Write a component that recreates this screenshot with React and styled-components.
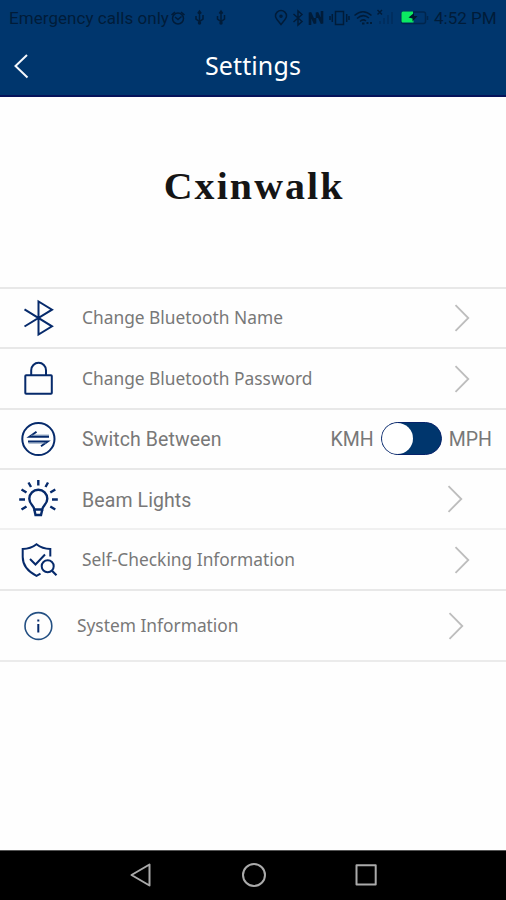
import React, { useState } from "react";
import styled, { createGlobalStyle } from "styled-components";

const App = () => {
  const [mph, setMph] = useState(false);

  return (
    <Screen>
      <GlobalStyle />
      <Header>
        <StatusBar>
          <Carrier>Emergency calls only</Carrier>
          <StatusLeft />
          <StatusRight />
          <Clock>4:52 PM</Clock>
        </StatusBar>
        <TitleBar>
          <BackButton aria-label="Back">
            <svg width="16" height="26" viewBox="0 0 16 26">
              <path d="M14 2L2.500 13L14.500 24.500" />
            </svg>
          </BackButton>
          <Title>Settings</Title>
        </TitleBar>
      </Header>
      <Brand>
        <span>Cxinwalk</span>
      </Brand>
      <List>
        <Row height="60px">
          <BluetoothIcon />
          <Label>Change Bluetooth Name</Label>
          <Arrow />
        </Row>
        <Row height="61px">
          <LockIcon />
          <Label>Change Bluetooth Password</Label>
          <Arrow />
        </Row>
        <Row height="60px">
          <SwapIcon />
          <Label roboto>Switch Between</Label>
          <Units>
            <span>KMH</span>
            <Toggle on={mph} onClick={() => setMph(!mph)} aria-label="Speed unit">
              <i />
            </Toggle>
            <span>MPH</span>
          </Units>
        </Row>
        <Row height="60px">
          <BulbIcon />
          <Label roboto low>Beam Lights</Label>
          <Arrow right="43.5px" />
        </Row>
        <Row height="61px" soft>
          <ShieldIcon />
          <Label>Self-Checking Information</Label>
          <Arrow />
        </Row>
        <Row height="73px">
          <InfoIcon />
          <Label left="77px">System Information</Label>
          <Arrow right="42px" />
        </Row>
      </List>
      <NavBar>
        <svg width="24" height="28" viewBox="0 0 24 28">
          <path d="M20.5 3.5V24.5L2.5 14Z" />
        </svg>
        <svg width="28" height="28" viewBox="0 0 28 28">
          <circle cx="14" cy="14" r="11" />
        </svg>
        <svg width="24" height="28" viewBox="0 0 24 28">
          <rect x="1.500" y="4.2" width="19.2" height="19.2" />
        </svg>
      </NavBar>
    </Screen>
  );
};

const StatusLeft = () => (
  <StatusIcons width="62" height="20" viewBox="168 8 62 20">
    <circle cx="178" cy="18.5" r="5.5" />
    <path d="M171.500 15L175 12M181 12L184.500 15M175 17L178 19.500L181.500 16.500" />
    <path d="M199.500 12V24M196 16V19L199.500 21.500L203 19V15M197.800 13.500L199.500 11L201.200 13.500M221 12V24M217.500 16V19L221 21.500L224.500 19V15M219.300 13.500L221 11L222.700 13.500" />
    <circle cx="199.500" cy="23" r="1" />
    <circle cx="221" cy="23" r="1" />
  </StatusIcons>
);

const StatusRight = () => (
  <StatusIcons push width="156" height="20" viewBox="273 8 156 20">
    <path d="M281 24.500C278 20.500 275.500 18.500 275.500 16A5.500 5.500 0 0 1 286.500 16C286.500 18.500 284 20.500 281 24.500Z" />
    <circle cx="281" cy="16.300" r="1" />
    <path d="M293.500 14L302 21.500L298 25V11L302 14.500L293.500 22" />
    <path strokeWidth="2.600" d="M310 25V12.500L315 23.500V18M322 11V23.500L317 12.500V18" />
    <path d="M335.500 11.500H343.500V24.500H335.500ZM332.300 14V22M346.700 14V22M330 16V20M349 16V20" />
    <path d="M354.500 15.500Q363 8 371.500 15.500M357 18.500Q363 13 369 18M360 21.500Q363 18.500 366 21" />
    <path strokeWidth="2" d="M362 23.500H364.500M366.500 23H368.500M370 23H372" />
    <path d="M377.500 10L382 14.500M382 10L377.500 14.500" />
    <path opacity="0.35" d="M380 24V21M384 24V18M388 24V15M392 24V12" />
    <rect x="401.500" y="12" width="24" height="11.500" rx="2" opacity="0.6" />
    <path opacity="0.6" d="M427.500 16V20" />
    <path stroke="none" fill="#0bea62" d="M403 11.500H413V14.500L410 17.500H413.500V22.500H402.500Q401.500 22.500 401.500 21V13Q401.500 11.500 403 11.500Z" />
    <path stroke="none" fill="#00182f" d="M408.500 17.500L414 13V16H417.500L412.500 21.500V18.500Z" />
  </StatusIcons>
);

const BluetoothIcon = () => (
  <RowIcon viewBox="0 0 78 44">
    <path d="M24.500 13.300L52 30.300L38.500 38.500V5.500L52 13.700L24.500 30.500" />
  </RowIcon>
);

const LockIcon = () => (
  <RowIcon viewBox="0 0 78 44">
    <rect x="25.300" y="18.200" width="26.500" height="18.600" rx="0.800" />
    <path d="M31.200 18V13.200A7.400 7.400 0 0 1 46 13.200V18" />
  </RowIcon>
);

const SwapIcon = () => (
  <RowIcon viewBox="0 0 78 44">
    <circle cx="38.400" cy="22" r="16.100" />
    <path d="M49 19.700H29.500L36.500 14.700M28 24.500H47.700L41 29.300" />
    <path strokeWidth="1" stroke="#6682a8" d="M31 18.200H49M28.500 26H46" />
  </RowIcon>
);

const BulbIcon = () => (
  <RowIcon viewBox="0 0 78 44" weight="2.400">
    <path d="M34.300 32.500C34.300 28.500 29.300 27.500 29.300 21.700A9 9 0 0 1 47.300 21.700C47.300 27.500 42.300 28.500 42.300 32.500ZM34.300 32.500L35.500 38H41L42.300 32.500" />
    <path d="M38.300 3V8.500M28.500 5.500L31 10M48 5.500L45.500 10M21.500 12.500L26.500 15.500M55.300 12.500L50.300 15.500M19.200 22.500H25M52 22.500H57.800M21.500 32.500L26.500 29.500M55.300 32.500L50.300 29.500" />
  </RowIcon>
);

const ShieldIcon = () => (
  <RowIcon viewBox="0 0 78 44" weight="2">
    <path d="M40.500 35.700L36.500 37.800C28 33.500 22.700 27.500 22.700 19V11C28 11 32.500 9.500 36.500 6.300C40.500 9.500 45 11 50.300 11V18.500" />
    <path d="M30 21L35.500 26.500L45 16.500" />
    <circle cx="47.700" cy="28.200" r="6" />
    <path strokeWidth="2.200" d="M52 32.700L56.500 37.200" />
  </RowIcon>
);

const InfoIcon = () => (
  <RowIcon viewBox="0 0 78 44" weight="1.600">
    <circle cx="38.400" cy="22" r="13.400" stroke="#245083" />
    <path strokeWidth="2" d="M38.300 20V28.500M38.300 15.500V17.500" />
  </RowIcon>
);

const Arrow = ({ right }) => (
  <ArrowSvg right={right} width="16" height="30" viewBox="0 0 16 30">
    <path d="M1.500 2.200L14.300 15L1.500 27.800" />
  </ArrowSvg>
);

const GlobalStyle = createGlobalStyle`
  * {
    box-sizing: border-box;
  }
  body {
    margin: 0;
    background: #fff;
    overflow: hidden;
  }
`;
const Screen = styled.div`
  display: flex;
  flex-direction: column;
  width: 506px;
  height: 900px;
  background: #fefefe;
`;
const Header = styled.header`
  height: 97px;
  background: #00366d;
  border-bottom: 2px solid #06135a;
`;
const StatusBar = styled.div`
  display: flex;
  align-items: center;
  height: 36px;
  padding: 0 10px 0 9px;
  color: #001c39;
  font-family: Roboto, sans-serif;
  font-size: 17px;
  line-height: 36px;
  white-space: nowrap;
`;
const Carrier = styled.span`
  width: 159px;
  letter-spacing: 0.05px;
`;
const Clock = styled.span`
  width: 62px;
  margin-left: 5px;
`;
const StatusIcons = styled.svg.withConfig({
  shouldForwardProp: (prop) => prop !== "push",
})`
  flex: none;
  margin-left: ${(props) => (props.push ? "auto" : "0")};
  fill: none;
  stroke: #001c39;
  stroke-width: 1.5;
`;
const TitleBar = styled.div`
  display: grid;
  grid-template-columns: 60px 1fr 60px;
  align-items: center;
  height: 60px;
`;
const BackButton = styled.button`
  display: flex;
  padding: 0 0 0 13px;
  border: 0;
  background: none;
  svg {
    fill: none;
    stroke: #f4f7fb;
    stroke-width: 2;
  }
`;
const Title = styled.h1`
  margin: 0;
  padding-bottom: 2px;
  color: #fff;
  font: 400 25px/36px "Noto Sans", sans-serif;
  letter-spacing: 0.1px;
  text-align: center;
`;
const Brand = styled.div`
  display: flex;
  justify-content: center;
  height: 190px;
  padding: 66px 0 0 2px;
  color: #151515;
  font: 700 38px/46px "Liberation Serif", serif;
  letter-spacing: 2px;
  span {
    transform: scaleX(1.05);
  }
`;
const List = styled.main`
  flex: 1;
`;
const Row = styled.div.withConfig({
  shouldForwardProp: (prop) => !["height", "soft"].includes(prop),
})`
  display: flex;
  align-items: center;
  height: ${(props) => props.height};
  border-top: 2px solid ${(props) => (props.soft ? "#f0f0f0" : "#e8e8e8")};
  &:last-child {
    border-bottom: 2px solid #ebebeb;
  }
`;
const RowIcon = styled.svg`
  flex: none;
  width: 78px;
  height: 44px;
  margin-right: -78px;
  fill: none;
  stroke: #062a6b;
  stroke-width: ${(props) => props.weight || 2};
`;
const Label = styled.span.withConfig({
  shouldForwardProp: (prop) => !["roboto", "low", "left"].includes(prop),
})`
  flex: 1;
  padding: ${(props) => (props.low ? "2px 0 0" : props.roboto ? "0" : "0 0 2px")};
  padding-left: ${(props) => props.left || "82px"};
  color: #787878;
  font-family: ${(props) => (props.roboto ? "Roboto" : '"Noto Sans"')},
    sans-serif;
  font-size: ${(props) => (props.roboto ? "19.5px" : "17.35px")};
  letter-spacing: ${(props) => (props.roboto ? "0.1px" : "0")};
  white-space: nowrap;
`;
const ArrowSvg = styled.svg`
  flex: none;
  margin-right: ${(props) => props.right || "36.5px"};
  fill: none;
  stroke: #bdbdbd;
  stroke-width: 1.8;
`;
const Units = styled.div`
  display: flex;
  align-items: center;
  gap: 7px;
  padding-right: 14px;
  color: #787878;
  font-family: Roboto, sans-serif;
  font-size: 19.5px;
`;
const Toggle = styled.button.withConfig({
  shouldForwardProp: (prop) => prop !== "on",
})`
  display: flex;
  justify-content: ${(props) => (props.on ? "flex-end" : "flex-start")};
  width: 61px;
  height: 33px;
  margin-bottom: 1px;
  padding: 0;
  border: 1px solid #06226a;
  border-radius: 17px;
  background: #00366d;
  i {
    width: 31px;
    height: 31px;
    border-radius: 50%;
    background: #fff;
  }
`;
const NavBar = styled.nav`
  display: flex;
  justify-content: center;
  gap: 87px;
  height: 50px;
  padding: 10px 0 0 2px;
  border-top: 1px solid #555;
  background: #000;
  svg {
    fill: none;
    stroke: #aaa;
    stroke-width: 2;
    stroke-linejoin: round;
  }
`;

export default App;
